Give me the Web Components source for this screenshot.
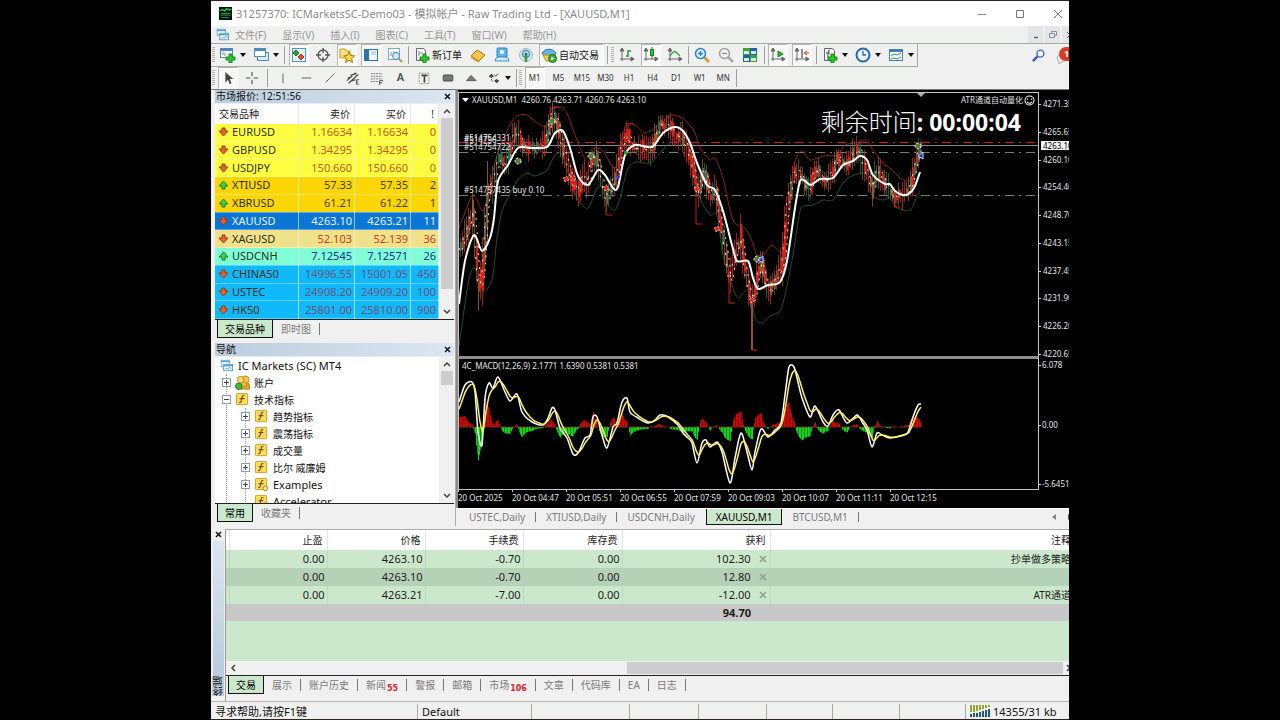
<!DOCTYPE html>
<html lang="zh-CN">
<head>
<meta charset="utf-8">
<title>31257370: ICMarketsSC-Demo03</title>
<style>
  html, body { margin: 0; background: #000; }
  body { height: 100vh; padding: 0 211px; box-sizing: border-box; display: flex;
    font: 11px/16px "Noto Sans", "Noto Sans CJK SC", sans-serif; color: #1c1c1c; }
</style>
</head>
<body>
<trade-terminal></trade-terminal>
<script>
const COMMON = `
  *{box-sizing:border-box}
  button{font:inherit;color:inherit;background:none;border:0;padding:0;margin:0;white-space:nowrap}
  svg{display:block;flex:none}
`;
function define(tag, css, html, ready) {
  const t = document.createElement('template');
  t.innerHTML = `<style>${COMMON}${css}</style>${html}`;
  customElements.define(tag, class extends HTMLElement {
    constructor() {
      super();
      this.attachShadow({ mode: 'open' }).append(t.content.cloneNode(true));
    }
    connectedCallback() { if (ready && !this.done) { this.done = true; ready(this.shadowRoot, this); } }
  });
}

/* ---------- icons ---------- */
const PLUS = '<path d="M9 7h3v3h3v3h-3v3H9v-3H6v-3h3z" fill="#2fc62f" stroke="#148a1c"/>';
const AXES = '<path d="M3 3v11M1 12h13M3 1L1 4h4zM15 12l-3-2v4z" fill="#666" stroke="#666"/>';
const FBOX = '<rect x="1.500" y="1.500" width="12" height="12" rx="1" fill="#fbdc5a" stroke="#c89a2c"/><path d="M10 4q-2-1-2.500 2l-1 4q-.5 2-2 1M5 7h5" fill="none" stroke="#6a5210" stroke-width="1.200"/>';
const ICONS = {
  logo: '<rect width="16" height="16" fill="#04140a"/><path d="M1 5l3-2 3 2 3-3 3 2 2-2M8 2v3" stroke="#1fd55b" stroke-width="1.500" fill="none"/><path d="M2 8h12M2 10h12M3 13h9" stroke="#2fae62"/>',
  app: '<rect x="1.500" y="1.500" width="10" height="8" fill="#fff" stroke="#5aa3d6"/><path d="M1 3h11" stroke="#5aa3d6" stroke-width="2"/><rect x="4.500" y="6.500" width="11" height="8" fill="#e9f5fd" stroke="#4a94cc"/><path d="M4 8h12" stroke="#5aa3d6" stroke-width="2"/><path d="M6 13l2-2 2 2 2-3 2 2" stroke="#5aa3d6" fill="none"/>',
  newchart: '<rect x=".5" y="1.500" width="12" height="9" fill="#fff" stroke="#4a8cc0"/><path d="M0 3h13" stroke="#4a8cc0" stroke-width="2"/><path d="M3 8V5m2 4V6" stroke="#888"/>' + PLUS,
  profiles: '<path d="M4.500 5.500h11v8h-11z" fill="#dcebf6" stroke="#4a8cc0"/><rect x="1.500" y="1.500" width="11" height="8" fill="#fff" stroke="#4a8cc0"/><path d="M1 3h12" stroke="#4a8cc0" stroke-width="2"/>',
  market: '<rect x="1.500" y="1.500" width="13" height="13" fill="#eaf6ff" stroke="#4a94cc"/><path d="M5 3l3 3-3 3-3-3z" fill="#2aa52a" stroke="#167a16"/><path d="M10 7l3 3-3 3-3-3z" fill="#e8532b" stroke="#b02d10"/>',
  target: '<circle cx="8" cy="8" r="5" fill="none" stroke="#555" stroke-width="1.300"/><path d="M8 1v5m0 4v5M1 8h5m4 0h5" stroke="#555" stroke-width="1.300"/>',
  star: '<path d="M1 2h5l1 2h4v7H1z" fill="#fde07a" stroke="#c79b23"/><path d="M10 5l1.600 3.500 4 .3-3 2.600 1 4-3.600-2.200L6.500 15.500l1-4-3-2.600 4-.4z" fill="#ffd83a" stroke="#a67c12"/>',
  nav: '<rect x="1.500" y="2.500" width="13" height="11" fill="#f4faff" stroke="#2d74ad"/><path d="M2 3h4v10H2z" fill="#2d74ad"/><path d="M8 5h5M8 7h5" stroke="#9bbad0"/>',
  tester: '<rect x="1.500" y="1.500" width="11" height="11" fill="#fff" stroke="#7ba9c9"/><path d="M4 9V5m3 5V4m3 4V5" stroke="#6d93b5"/><circle cx="9" cy="9" r="3.500" fill="#cfe9fb" stroke="#4a8cc0"/><path d="M12 12l3 3" stroke="#c6952e" stroke-width="2"/>',
  order: '<path d="M2.500 1.500h7l2 2v10h-9z" fill="#fff" stroke="#666"/><path d="M5 4v5M5 6h4" stroke="#888"/>' + PLUS,
  book: '<path d="M1 9l6-6 8 5-6 6z" fill="#f3c74a" stroke="#a97812"/><path d="M1 9l8 5v2l-8-5z" fill="#d9981f"/>',
  terminal: '<rect x="3" y="1" width="10" height="9" rx="1" fill="#5eb6ee" stroke="#2d7fbe"/><circle cx="8" cy="5" r="2" fill="#fff"/><path d="M1 14q0-4 4-4h6q4 0 4 4z" fill="#cfeafd" stroke="#4797cf"/>',
  signal: '<circle cx="8" cy="8" r="6.500" fill="#dbe9ee" stroke="#9bb7c1"/><circle cx="8" cy="7" r="3.500" fill="none" stroke="#4e91b3" stroke-width="1.500"/><path d="M8 7v8" stroke="#2ea22e" stroke-width="2.500"/><circle cx="8" cy="7" r="1.500" fill="#2b6b93"/>',
  auto: '<path d="M1 6q7-8 14 0l-2 3H3z" fill="#65b5e6" stroke="#2d7fae"/><path d="M2 8h12l-2 6H5z" fill="#f5cf50" stroke="#b88a1c"/><circle cx="11.500" cy="11.500" r="4" fill="#2fb52f" stroke="#157815"/><path d="M10 9.500v4l3.500-2z" fill="#fff"/>',
  bars: AXES + '<path d="M9 3v7M9 9H7m2-5h3" stroke="#1f9a2c" stroke-width="1.500" fill="none"/>',
  candles: AXES + '<path d="M9 0v12" stroke="#128a1c"/><rect x="7.500" y="2.500" width="3" height="6" fill="#2fc13a" stroke="#128a1c"/>',
  line: AXES + '<path d="M3 9q4-6 6-4t4 4" stroke="#2fa53a" stroke-width="1.300" fill="none"/>',
  zoomin: '<path d="M10 10l5 5" stroke="#d0a13a" stroke-width="3"/><circle cx="6.500" cy="6.500" r="5" fill="#dff2ff" stroke="#2d82c8" stroke-width="1.500"/><path d="M4 6.500h5M6.500 4v5" stroke="#2d82c8" stroke-width="1.500"/>',
  zoomout: '<path d="M10 10l5 5" stroke="#aaa" stroke-width="2.500"/><circle cx="6.500" cy="6.500" r="5" fill="#f3f3f3" stroke="#a0a0a0" stroke-width="1.500"/><path d="M4 6.500h5" stroke="#999" stroke-width="1.500"/>',
  tile: '<path d="M1 1h7v7H1zM8 8h7v7H8z" fill="#3ba33b"/><path d="M8 1h7v7H8zM1 8h7v7H1z" fill="#235fae"/><path d="M2 4h5v3H2zM9 4h5v3H9zM2 11h5v3H2zM9 11h5v3H9z" fill="#d6efd6"/>',
  scroll: AXES + '<path d="M8 4l5 3-5 3z" fill="#2fb53a" stroke="#128a1c"/>',
  shift: AXES + '<path d="M8 2v9" stroke="#555" stroke-width="1.300"/><path d="M15 6h-4m2-2l-3 2 3 2" stroke="#c24b1e" fill="none"/>',
  indicator: '<path d="M2.500 1.500h8l2 2v10h-10z" fill="#fff" stroke="#666"/><path d="M8 3q-2 0-2 3v5M4 6h4" stroke="#444" fill="none"/>' + PLUS,
  clock: '<circle cx="8" cy="8" r="6.500" fill="#e8f5ff" stroke="#2469b3" stroke-width="2"/><path d="M8 4v4h3" stroke="#2469b3" fill="none" stroke-width="1.300"/>',
  template: '<rect x="1.500" y="2.500" width="13" height="11" fill="#f4faf4" stroke="#3d7fae"/><path d="M1 4h14" stroke="#3d7fae" stroke-width="2"/><path d="M3 9l3-2 3 1 4-2M3 12l3-1 3 1 4-2" stroke="#487" fill="none"/>',
  search: '<circle cx="10" cy="6" r="3.700" fill="#f4f8ff" stroke="#4569c0" stroke-width="1.500"/><path d="M7 9l-5 5" stroke="#3c5cb0" stroke-width="2.500"/>',
  cursor: '<path d="M5 1v12l3-3 2 5 2-1-2-5h4z" fill="#444"/>',
  cross: '<path d="M8 1v5m0 4v5M1 8h5m4 0h5" stroke="#555" stroke-width="1.300"/>',
  vline: '<path d="M8 3v11" stroke="#555"/>', hline: '<path d="M3 8h11" stroke="#555"/>', trend: '<path d="M3 13L13 3" stroke="#555"/>',
  channel: '<path d="M1 11L11 2M3 14L14 4M2 8l4-1m-2 5l7-2M5 5l7-2" stroke="#444" stroke-width="1.200"/><path d="M15 10h-3v5h3m-3-2.500h2" stroke="#444" fill="none"/>',
  fibo: '<path d="M1 3h13M1 6h13M1 9h13M1 12h8" stroke="#666" stroke-dasharray="2 1"/><path d="M11 16v-5h4m-4 2.500h3" stroke="#444" fill="none"/>',
  label: '<rect x="2.500" y="2.500" width="11" height="12" fill="none" stroke="#888" stroke-dasharray="2 1"/><path d="M5 5h7M8.500 5v8" stroke="#444" stroke-width="2"/>',
  rect: '<rect x="2.500" y="4.500" width="11" height="7" rx="1" fill="#777" stroke="#444"/>',
  tri: '<path d="M3 11l5-6 6 6z" fill="#777" stroke="#555"/>',
  arrows: '<path d="M2 6l3-3 3 3-3 2zM8 11l3 3 3-3-3-2z" fill="#444"/><path d="M8 4l2 2 3-3M5 9l1 3" stroke="#444" fill="none"/>',
  f: FBOX,
  fdot: FBOX + '<circle cx="12" cy="12" r="2.500" fill="#ffe680" stroke="#a67c12"/>',
  people: '<path d="M5 15q0-7 6-7t4 7z" fill="#e6a91d" stroke="#a97812"/><circle cx="11" cy="5" r="4" fill="#f5c648" stroke="#b88a1c"/><path d="M3 12q0-5 5-5t4 5z" fill="#f3bd35" stroke="#b88a1c"/><circle cx="6" cy="5" r="3.500" fill="#f9d868" stroke="#b88a1c"/><circle cx="4" cy="12" r="3.500" fill="#3fb53a" stroke="#24872b"/>',
  smile: '<circle cx="8" cy="8" r="6.500" fill="none" stroke="#fff" stroke-width="1.500"/><path d="M5 5v2m6-2v2M4 10q4 4 8 0" stroke="#fff" stroke-width="1.500" fill="none"/>',
  net: '<path d="M1 0v7M4 0v7M7 0v6M10 0v5M13 0v4M16 0v3M19 0v2" stroke="#93ab2d" stroke-width="2"/><path d="M1 9v3M4 8v4M7 8v4M10 7v5M13 6v6M16 5v7M19 4v8" stroke="#1d577b" stroke-width="2"/>',
  down: '<path d="M4 1h3v3h3L5.500 9 1 4h3z" fill="#f0622c" stroke="#98360f"/>',
  up: '<path d="M4 9h3V6h3L5.500 1 1 6h3z" fill="#46cf4b" stroke="#157f22"/>'
};
define('ui-icon', ':host{display:block;flex:none}', '<svg aria-hidden="true"></svg>', (root, el) => {
  const name = el.getAttribute('name'), svg = root.querySelector('svg');
  const box = name === 'net' ? [20, 12] : /^(up|down)$/.test(name) ? [11, 10] : [16, 16];
  const w = el.getAttribute('size') || box[0];
  svg.setAttribute('viewBox', `0 0 ${box[0]} ${box[1]}`);
  svg.setAttribute('width', w);
  svg.setAttribute('height', Math.round(w * box[1] / box[0]));
  svg.innerHTML = ICONS[name];
});

/* ---------- toolbar parts ---------- */
define('tool-button', `
  :host{display:flex;width:24px;height:100%;flex:none}
  :host([menu]){width:33px} :host([menu=tight]){width:32px}
  :host([wide]){width:auto} :host([fluid]){width:auto;min-width:0}
  button{display:flex;align-items:center;justify-content:center;gap:2px;flex:1;font-size:10px;color:#111}
  :host([wide]) button{padding:0 4px}
  :host([pressed]) button{background:#f8f8f8;border:1px solid #b4b8b4;border-right-color:#fff;border-bottom-color:#fff;margin:0 2px}
  :host([pressed][wide]) button{margin:0 1px;padding:0 4px 0 1px}
  i{width:0;border:3px solid transparent;border-top:4px solid #111;border-bottom:0;display:none;margin-left:2px}
  :host([menu]) i{display:block}
  :host([small]) button{font-size:8px;color:#333}
`, '<button><slot></slot><i></i></button>', (root, el) => {
  if (el.title) root.querySelector('button').setAttribute('aria-label', el.title);
});
define('tool-sep', `:host{display:block;flex:none;width:var(--w,3px);height:100%;padding:2px 0}
  span{display:block;width:1px;height:100%;margin:0 auto;background:#9ba39b}`, '<span></span>');
define('tool-grip', `:host{display:block;flex:none;width:5px;height:16px;margin:auto 0}
  span{display:block;width:3px;height:100%;margin:auto;background:repeating-linear-gradient(#b4b4b4 0 1px,#eee 1px 2px)}`, '<span></span>');

define('title-bar', `
  :host{display:flex;flex:none;align-items:center;height:25px;background:#fff;color:#8c8c8c;font-size:11px;padding-left:8px}
  h1{font:inherit;margin:0 auto 0 4px;white-space:nowrap;overflow:hidden}
  button{width:38px;height:24px;display:grid;place-items:center}
  button:last-child{margin-right:-8px}
`, `<ui-icon name="logo" size="13"></ui-icon><h1>31257370: ICMarketsSC-Demo03 - 模拟帐户 - Raw Trading Ltd - [XAUUSD,M1]</h1>
  <button aria-label="最小化"><svg width="10" height="10"><path d="M1 5.500h8" stroke="#888"/></svg></button>
  <button aria-label="最大化"><svg width="10" height="10"><path d="M1.500 1.500h7v7h-7z" fill="none" stroke="#777"/></svg></button>
  <button aria-label="关闭"><svg width="10" height="10"><path d="M1 1l8 8M9 1l-8 8" stroke="#777"/></svg></button>`);

define('menu-bar', `
  :host{display:flex;flex:none;align-items:center;height:18px;background:#f0f0f0;border-bottom:1px solid #a3aba3;padding-left:5px;color:#979797;font-size:10px;overflow:hidden}
  nav{display:flex;gap:16px;margin:0 auto 0 6px}
  .mdi{display:flex;gap:2px;align-self:stretch;margin-right:-8px}
  .mdi button{width:15px;background:#e3e5e7;display:grid;place-items:center}
`, `<ui-icon name="app" size="13"></ui-icon><nav><button>文件(F)</button><button>显示(V)</button><button>插入(I)</button><button>图表(C)</button><button>工具(T)</button><button>窗口(W)</button><button>帮助(H)</button></nav>
  <div class="mdi"><button aria-label="最小化"><svg width="8" height="8"><path d="M2 6.500h4" stroke="#667" stroke-width="1.500"/></svg></button>
  <button aria-label="还原"><svg width="8" height="8"><path d="M2.500 2V.5h5v4H6M.5 2.500h5v4h-5z" fill="none" stroke="#8391a3"/></svg></button>
  <button aria-label="关闭"><svg width="8" height="8"><path d="M1 1l6 6M7 1L1 7" stroke="#667"/></svg></button></div>`);

define('main-toolbar', `
  :host{display:flex;flex:none;align-items:center;height:23px;background:#f0f0f0;overflow:hidden}
  .bar{display:flex;align-items:center;height:23px;border-bottom:1px solid #a3aba3;border-right:1px solid #a3aba3}
  .right{margin-left:auto;display:flex;align-items:center;gap:8px;margin-right:-5px}
  .note{position:relative;width:20px;height:18px}
  .note svg{position:absolute;left:2px;top:7px}
  .note b{position:absolute;left:5px;top:0;width:15px;height:14px;border-radius:7px;background:#d83b22;color:#fff;font-size:9px;line-height:14px;text-align:center}
`, `<div class="bar"><tool-grip></tool-grip>
  <tool-button menu title="新图表"><ui-icon name="newchart"></ui-icon></tool-button><tool-button menu title="配置文件"><ui-icon name="profiles"></ui-icon></tool-button>
  <tool-sep style="--w:5px"></tool-sep>
  <tool-button pressed title="市场报价"><ui-icon name="market"></ui-icon></tool-button><tool-button title="数据窗口"><ui-icon name="target"></ui-icon></tool-button>
  <tool-button pressed title="导航"><ui-icon name="star"></ui-icon></tool-button><tool-button pressed title="终端"><ui-icon name="nav"></ui-icon></tool-button>
  <tool-button title="策略测试"><ui-icon name="tester"></ui-icon></tool-button><tool-sep></tool-sep>
  <tool-button wide><ui-icon name="order"></ui-icon>新订单</tool-button>
  <tool-button title="编辑器"><ui-icon name="book"></ui-icon></tool-button><tool-button title="虚拟主机"><ui-icon name="terminal"></ui-icon></tool-button><tool-button title="信号"><ui-icon name="signal"></ui-icon></tool-button>
  <tool-button wide pressed><ui-icon name="auto"></ui-icon>自动交易</tool-button><tool-sep style="--w:5px"></tool-sep><tool-grip></tool-grip>
  <tool-button title="柱状图"><ui-icon name="bars"></ui-icon></tool-button><tool-button pressed title="蜡烛图"><ui-icon name="candles"></ui-icon></tool-button><tool-button title="折线图"><ui-icon name="line"></ui-icon></tool-button><tool-sep></tool-sep>
  <tool-button title="放大"><ui-icon name="zoomin"></ui-icon></tool-button><tool-button title="缩小"><ui-icon name="zoomout"></ui-icon></tool-button><tool-button title="平铺"><ui-icon name="tile"></ui-icon></tool-button><tool-sep style="--w:4px"></tool-sep>
  <tool-button pressed title="自动滚动"><ui-icon name="scroll"></ui-icon></tool-button><tool-button pressed title="图表平移"><ui-icon name="shift"></ui-icon></tool-button><tool-sep style="--w:4px"></tool-sep>
  <tool-button menu title="指标"><ui-icon name="indicator"></ui-icon></tool-button><tool-button menu title="周期"><ui-icon name="clock"></ui-icon></tool-button><tool-button menu title="模板"><ui-icon name="template"></ui-icon></tool-button></div>
  <div class="right"><ui-icon name="search" size="15"></ui-icon><div class="note"><svg width="12" height="11"><path d="M1 4q0-3 5-3t5 3-5 4l-3 2V8Q1 7 1 4z" fill="#e4e4ea" stroke="#b0b0b8"/></svg><b>1</b></div></div>`);

define('draw-toolbar', `
  :host{display:flex;flex:none;align-items:center;height:23px;background:#f0f0f0;border-bottom:1px solid #777}
  .tools,.frames{display:grid;height:22px}
  .tools{grid-template-columns:repeat(9,1fr) 32px;width:244px}
  .frames{grid-template-columns:repeat(9,1fr);width:212px}
  b{font:bold 11px/16px Roboto,sans-serif;color:#555}
`, `<tool-grip></tool-grip><tool-button pressed title="光标"><ui-icon name="cursor" size="14"></ui-icon></tool-button><tool-button title="十字"><ui-icon name="cross" size="14"></ui-icon></tool-button><tool-sep style="--w:7px"></tool-sep>
  <div class="tools"></div><tool-sep></tool-sep><tool-grip></tool-grip><div class="frames"></div><tool-sep></tool-sep>`, root => {
  const names = { vline: '垂直线', hline: '水平线', trend: '趋势线', channel: '通道', fibo: '斐波纳契', A: '文本', label: '标签', rect: '矩形', tri: '三角形', arrows: '箭头' };
  root.querySelector('.tools').innerHTML = Object.keys(names).map(n =>
    `<tool-button ${n === 'arrows' ? 'menu="tight"' : 'fluid'} title="${names[n]}">${n === 'A' ? '<b>A</b>' : `<ui-icon name="${n}" size="14"></ui-icon>`}</tool-button>`).join('');
  root.querySelector('.frames').innerHTML = 'M1 M5 M15 M30 H1 H4 D1 W1 MN'.split(' ').map((n, i) =>
    `<tool-button small fluid ${i ? '' : 'pressed'}>${n}</tool-button>`).join('');
});

/* ---------- generic dock parts ---------- */
define('tab-item', `
  :host{display:flex;flex:none;height:100%}
  button{padding:0 calc(var(--pad,8px) + 1px) 0 var(--pad,8px);color:#7b7b7b;display:flex;align-items:center;position:relative;height:100%}
  button::after{content:"";position:absolute;right:0;top:3px;bottom:3px;width:1px;background:#777}
  :host([bare]) button::after{display:none}
  :host([on]) button{background:#cbe8cd;color:#000;border:1px solid #111;border-top:0;padding:0 calc(var(--pad,8px) - 1px)}
  :host([on]) button::after{display:none}
  sub{color:#d8232f;font:bold 8px/10px "DejaVu Sans",sans-serif;align-self:flex-end;margin-left:1px}
`, '<button role="tab"><slot></slot><sub hidden></sub></button>', (root, el) => {
  const s = root.querySelector('sub');
  if (el.hasAttribute('count')) { s.hidden = false; s.textContent = el.getAttribute('count'); }
});
define('dock-panel', `
  :host{display:flex;flex-direction:column;background:#f0f0f0;min-height:0}
  header{display:flex;flex:none;justify-content:space-between;align-items:center;height:14px;background:linear-gradient(90deg,#bccddd,#dce6f2);padding:0 3px 0 1px;font-size:10px;color:#111;border-bottom:1px solid #e8eef4;overflow:hidden}
  h2{font:inherit;line-height:13px;margin:0}
  .body{display:flex;flex:1;min-height:0;background:#fff;overflow:hidden}
  .tabs{display:flex;flex:none;height:19px;border-top:1px solid #222;padding-left:2px;font-size:10px}
  ::slotted(.grow){flex:1;min-width:0}
`, `<header><h2></h2><button aria-label="关闭"><svg width="7" height="7"><path d="M1 1l5 5M6 1L1 6" stroke="#111" stroke-width="1.500"/></svg></button></header>
  <div class="body"><slot></slot></div><div class="tabs" role="tablist"><slot name="tab"></slot></div>`,
  (root, el) => { root.querySelector('h2').textContent = el.getAttribute('heading'); });
define('v-scroll', `
  :host{display:flex;flex-direction:column;align-items:center;width:15px;flex:none;background:#f0f0f0;padding:4px 1px}
  i{width:12px;height:var(--len);background:#cdcdcd;margin:3px 0 auto}
`, `<svg width="8" height="7"><path d="M1 5l3-3 3 3" fill="none" stroke="#444" stroke-width="1.500"/></svg><i></i><svg width="8" height="7"><path d="M1 2l3 3 3-3" fill="none" stroke="#444" stroke-width="1.500"/></svg>`);

const QUOTES = [
  ['down', 'EURUSD', '1.16634', '1.16634', 0, '#ffff42', '#c2571c'], ['down', 'GBPUSD', '1.34295', '1.34295', 0, '#ffff42', '#c2571c'],
  ['down', 'USDJPY', '150.660', '150.660', 0, '#ffff42', '#c2571c'], ['up', 'XTIUSD', '57.33', '57.35', 2, '#fdd605', '#453a1a'],
  ['up', 'XBRUSD', '61.21', '61.22', 1, '#fdd605', '#453a1a'], ['down', 'XAUUSD', '4263.10', '4263.21', 11, '#0a76d6', '#e8f4ff'],
  ['down', 'XAGUSD', '52.103', '52.139', 36, '#f0e28a', '#cc3b20'], ['up', 'USDCNH', '7.12545', '7.12571', 26, '#80ffd6', '#0a2f8c'],
  ['down', 'CHINA50', '14996.55', '15001.05', 450, '#10b9f9', '#6d5279'], ['down', 'USTEC', '24908.20', '24909.20', 100, '#10b9f9', '#6d5279'],
  ['down', 'HK50', '25801.00', '25810.00', 900, '#10b9f9', '#6d5279']];
define('quote-table', `
  :host{display:block}
  table{width:100%;height:100%;table-layout:fixed;border-collapse:collapse}
  th{font-weight:400;font-size:10px;height:20px;background:#fff;border-right:1px solid #e4e4e4;text-align:right;padding:0 4px}
  th:first-child{text-align:left}
  td{padding:0 2px;line-height:14px;text-align:right;border-right:1px solid #ffffff88;border-bottom:1px solid #ffffff55;background:var(--bg);color:var(--fg)}
  td:first-child{text-align:left;color:#28301c}
  tr.sel td{color:#e8f4ff}
  .s{display:flex;align-items:center;gap:3px;padding-left:1px}
`, `<table><colgroup><col><col style="width:56px"><col style="width:56px"><col style="width:28px"></colgroup>
  <thead><tr><th>交易品种</th><th>卖价</th><th>买价</th><th>!</th></tr></thead><tbody></tbody></table>`, root => {
  root.querySelector('tbody').innerHTML = QUOTES.map(q =>
    `<tr style="--bg:${q[5]};--fg:${q[6]}" class="${q[1] === 'XAUUSD' ? 'sel' : ''}"><td><span class="s"><ui-icon name="${q[0]}"></ui-icon>${q[1]}</span></td><td>${q[2]}</td><td>${q[3]}</td><td>${q[4]}</td></tr>`).join('');
});

define('nav-tree', `
  :host{display:block;overflow:hidden;color:#111}
  ul{list-style:none;margin:0;padding:0}
  .row{display:flex;align-items:center;height:17px;white-space:nowrap}
  .cjk{font-size:10px}
  .root{padding-left:5px;gap:5px}
  .l1{margin-left:11px;border-left:1px dotted #999}
  .l1 .row{gap:4px;margin-left:-5px}
  .l2{margin-left:18px;border-left:1px dotted #999}
  .row i{width:9px;height:9px;border:1px solid #8b9bb0;background:linear-gradient(#445,#445) center/5px 1px no-repeat,linear-gradient(#445,#445) center/1px 5px no-repeat,#fff;flex:none}
  .row i.open{background:linear-gradient(#445,#445) center/5px 1px no-repeat,#fff}
  .row i.none{border:0;background:none}
`, `<ul><li><div class="row root"><ui-icon name="app" size="13"></ui-icon>IC Markets (SC) MT4</div>
  <ul class="l1"><li><div class="row cjk"><i></i><ui-icon name="people" size="15"></ui-icon>账户</div></li>
  <li><div class="row cjk"><i class="open"></i><ui-icon name="f" size="15"></ui-icon>技术指标</div><ul class="l2"></ul></li></ul></li></ul>`, root => {
  root.querySelector('.l2').innerHTML = ['趋势指标', '震荡指标', '成交量', '比尔 威廉姆', 'Examples', 'Accelerator'].map((t, i) =>
    `<li><div class="row ${i < 4 ? 'cjk' : ''}"><i class="${i === 5 ? 'none' : ''}"></i><ui-icon name="${i < 4 ? 'f' : 'fdot'}" size="15"></ui-icon>${t}</div></li>`).join('');
});

/* ---------- charts ---------- */
const MID = [459,250,467,228,472,211,475,245,478,285,482,271,487,195,493,181,498,160,505,165,512,138,517,131,522,145,532,148,543,146,548,128,552,113,557,125,562,148,567,165,572,183,577,191,583,175,587,185,591,158,597,161,602,185,606,199,612,181,617,171,621,145,627,135,632,148,642,148,650,150,655,138,660,125,668,126,675,135,682,138,687,151,692,165,697,195,703,171,710,195,715,190,720,225,725,251,729,281,733,261,740,238,745,275,752,301,757,275,760,263,768,291,777,275,783,255,787,201,795,171,802,179,809,190,815,168,823,181,832,171,837,157,845,166,857,149,863,165,872,188,877,170,887,188,893,196,903,195,910,185,917,155,920,147];
const MA = [459,304,465,261,474,235,482,251,490,238,494,218,498,181,508,165,518,148,532,148,547,147,555,133,563,131,570,148,578,176,588,185,598,170,605,175,613,188,618,187,625,155,635,145,652,147,663,133,675,127,683,131,690,143,697,163,707,185,715,190,723,211,732,245,737,261,748,261,753,278,758,289,768,285,780,282,787,261,795,208,800,181,805,181,811,185,820,179,833,178,843,165,853,161,860,156,867,160,873,175,885,184,890,184,895,191,903,195,910,193,915,186,920,172];
const UP = [459,228,466,210,472,196,477,200,483,211,489,190,497,155,510,125,517,116,527,115,537,123,547,126,550,111,560,107,567,113,575,135,583,155,588,158,593,148,603,151,615,168,622,138,627,124,635,125,645,133,655,128,665,120,673,115,685,120,695,133,700,148,710,160,715,158,723,178,733,220,745,228,752,241,757,255,765,253,772,245,782,253,787,235,792,178,797,156,803,151,810,160,823,156,837,155,845,145,855,143,867,140,873,150,885,165,890,168,903,180,912,178,917,155,920,143];
const LO = [459,346,468,285,474,268,482,291,488,288,493,275,497,238,502,211,508,198,517,181,527,173,535,176,547,170,555,155,562,155,570,178,578,200,588,208,597,188,602,188,608,205,615,210,620,198,627,171,635,162,650,163,662,151,673,140,685,141,695,171,700,198,710,215,717,215,723,255,732,285,738,298,743,293,750,291,755,318,762,323,770,316,780,311,785,295,793,255,800,211,805,206,813,205,823,200,833,200,843,183,852,176,867,174,872,195,883,200,890,198,897,208,910,210,915,201,920,191];
const MACD = [459,402,465,385,472,382,475,392,478,432,482,445,485,398,489,383,493,388,498,377,505,392,510,401,517,394,522,412,532,422,543,425,548,418,552,408,555,410,560,428,567,438,573,454,578,453,585,438,590,435,593,417,597,417,602,435,607,448,613,427,617,423,622,402,627,398,630,412,638,418,648,423,655,420,660,415,668,417,678,425,683,433,688,438,692,443,697,463,702,443,706,440,710,447,717,442,722,452,730,483,735,458,741,433,747,452,752,470,755,452,761,429,768,437,775,430,781,423,785,395,789,367,794,367,798,382,802,398,810,417,815,406,823,422,828,426,833,415,839,410,847,423,857,415,862,422,867,430,872,447,877,433,882,435,890,438,903,435,908,432,913,417,918,405,921,404];
const at = (p, x) => {
  for (let i = 0; i < p.length - 2; i += 2)
    if (x <= p[i + 2]) return p[i + 1] + (p[i + 3] - p[i + 1]) * (x - p[i]) / (p[i + 2] - p[i]);
  return p[p.length - 1];
};
let seed = 7;
const rnd = () => (seed = seed * 16807 % 2147483647) / 2147483647;
/* Catmull-Rom spline through the points, written as cubic segments */
const line = (p, c, w = 1, extra = '') => {
  const n = p.length / 2, P = i => { i = Math.max(0, Math.min(n - 1, i)); return [p[2 * i], p[2 * i + 1]]; };
  let d = `M${P(0)}`;
  for (let i = 0; i < n - 1; i++) {
    const a = P(i - 1), b = P(i), e = P(i + 1), f = P(i + 2);
    d += `C${b[0] + (e[0] - a[0]) / 7},${b[1] + (e[1] - a[1]) / 7} ${e[0] - (f[0] - b[0]) / 7},${e[1] - (f[1] - b[1]) / 7} ${e}`;
  }
  return `<path d="${d}" fill="none" stroke="${c}" stroke-width="${w}" ${extra}/>`;
};

function priceSvg() {
  let s = '<path d="M459 142.500H1039" stroke="#c81e1e" stroke-dasharray="9 5 2 5"/><path d="M459 145.500H1039" stroke="#8c8c8c"/><path d="M459 152.500H1039M459 195.500H1039" stroke="#718071" stroke-dasharray="9 5 2 5"/>';
  s += line(UP, '#8f1f2b') + line(LO, '#23502a');
  for (let x = 460; x < 921; x += 2) {
    const y = at(MID, x), steep = Math.abs(at(MID, Math.min(x + 3, 920)) - y);
    const h = 3 + rnd() * 7 + steep * .5, c = ['#d81f1a', '#9a5230', '#75613a', '#d81f1a', '#b82a22', '#22704a'][Math.floor(rnd() * 6)];
    const m = y + (rnd() - .5) * 5;
    s += `<path d="M${x + .5} ${m - h - rnd() * 5}V${m + h + rnd() * 5}" stroke="${c}" opacity=".8"/>`;
    if (rnd() > .35) s += `<path d="M${x + 1} ${m - h * .6}V${m + h * .6}" stroke="${c}" stroke-width="2"/>`;
  }
  s += '<path d="M487.500 161V245M552.500 105v28M478.500 270v40" stroke="#7d5a30"/><path d="M552 107h7M606 190v25h6M696 170v54h6M729 270v33h6M627 124h6M895 190v17h5" fill="none" stroke="#c81f1a"/><path d="M752 300v50" stroke="#94502c" stroke-width="2"/><path d="M752 350h5" stroke="#e01f1a"/>';
  const sh = MID.map((v, i) => i % 2 ? v : v + 3);
  s += line(sh, '#f5e4b8', 1, 'stroke-dasharray="2 5"') + line(MID, '#e6f0da', 1, 'stroke-dasharray="2 9"');
  s += line(MA, '#fff', 2, 'stroke-linejoin="round"');
  s += [[566,179],[573,178],[606,188],[697,189],[717,229],[752,300]].map(d => `<circle cx="${d[0]}" cy="${d[1]}" r="2.500" fill="#e8241c" stroke="#ffd8c8" stroke-dasharray="2 2"/>`).join('');
  s += [[552,121],[518,161],[591,156],[757,259],[918,146]].map(d => `<circle cx="${d[0]}" cy="${d[1]}" r="3" fill="#5c7c30" stroke="#fff" stroke-dasharray="2 2"/>`).join('');
  s += '<circle cx="626" cy="153" r="2" fill="#22a02c"/><path d="M763 256v7l-5-3zM923 152v7l-5-3z" fill="#2534b8" stroke="#cdd4ff"/><circle cx="618" cy="177" r="2" fill="#2440e0"/><path d="M917 93h8l-4 4z" fill="#a8b0b0"/>';
  return `<g transform="translate(-459 -93)">${s}</g>`;
}
function macdSvg() {
  let s = '', y = 412, sig = [];
  for (let x = 459; x <= 921; x++) {
    const v = at(MACD, x); y += (v - y) * .27;
    if (x % 3 === 0 || x === 921) sig.push(x, y);
    const d = (y - v) * 1.4;
    if (Math.abs(d) > 1) s += `<path d="M${x + .5} 427V${427 - d}" stroke="${d > 0 ? '#c80808' : '#12d41c'}" opacity="${x % 3 ? 1 : .65}"/>`;
  }
  s += '<path d="M459 427h462" stroke="#7a3018" stroke-dasharray="8 2"/>' + line(MACD, '#fff', 1.5) + line(sig, '#fff35a', 1.5);
  return `<g transform="translate(-459 -359)">${s}</g>`;
}
define('chart-view', `
  :host{display:grid;grid-template-columns:minmax(0,1fr) 30px;grid-template-rows:minmax(0,1fr) 134px 18px;background:#000;color:#e4e4e4;font-size:8px;line-height:12px;
    border-left:2px solid #8a8a8a;padding-top:2px;overflow:hidden;min-height:0}
  .plot{position:relative;border:1px solid #c9c9c9;border-width:1px 1px 0 1px;overflow:hidden;min-width:0}
  .macd{border-top:3px solid #8d8d8d;border-bottom-width:1px}
  .plot svg.draw{position:absolute;left:0;top:0;width:100%;height:100%}
  .cap{position:absolute;left:3px;top:1px;white-space:pre;display:flex;align-items:center;gap:3px}
  .ea{position:absolute;right:3px;top:1px;display:flex;align-items:center;gap:1px}
  .time{position:absolute;right:17px;top:14px;font-size:24px;line-height:30px;color:#fff;font-weight:300;white-space:pre;display:flex}
  .time b{font-weight:700;font-size:23px}
  .ord{position:absolute;left:5px}
  .prices{display:flex;flex-direction:column;justify-content:space-between;padding:6px 0 0 4px;margin-bottom:-4px;position:relative}
  .prices span::before,.lv span::before{content:"";position:absolute;left:0;width:2px;height:1px;margin-top:6px;background:#ccc}
  .now{position:absolute;left:2px;right:0;top:49px;background:#f4f4f4;color:#000;line-height:9px;padding-left:2px}
  .lv{position:relative;display:flex;flex-direction:column;justify-content:space-between;padding:3px 0 0 3px}
  .axis{grid-column:1/-1;display:grid;grid-template-columns:repeat(9,54px);padding-top:2px;white-space:nowrap}
  .axis span{position:relative}
  .axis span::before{content:"";position:absolute;left:0;top:-2px;width:1px;height:2px;background:#ccc}
`, `<div class="plot price"><svg class="draw" role="img" aria-label="XAUUSD"></svg>
    <div class="cap"><svg width="7" height="4"><path d="M0 0h7L3.500 4z" fill="#fff"/></svg>XAUUSD,M1  4260.76 4263.71 4260.76 4263.10</div>
    <div class="ord" style="top:39px">#514754331</div><div class="ord" style="top:41px">#514756</div><div class="ord" style="top:48px">#514754722</div><div class="ord" style="top:91px">#514757435 buy 0.10</div>
    <div class="ea">ATR通道自动量化<ui-icon name="smile" size="11"></ui-icon></div>
    <div class="time">剩余时间<b>: 00:00:04</b></div></div>
  <div class="prices"><span>4271.35</span><span>4265.65</span><span>4260.10</span><span>4254.40</span><span>4248.70</span><span>4243.15</span><span>4237.45</span><span>4231.90</span><span>4226.20</span><span>4220.65</span><div class="now">4263.10</div></div>
  <div class="plot macd"><svg class="draw" role="img" aria-label="MACD"></svg><div class="cap">4C_MACD(12,26,9) 2.1771 1.6390 0.5381 0.5381</div></div>
  <div class="lv"><span>6.078</span><span>0.00</span><span>-5.6451</span></div>
  <div class="axis"></div>`, root => {
  root.querySelector('.price .draw').innerHTML = priceSvg();
  root.querySelector('.macd .draw').innerHTML = macdSvg();
  root.querySelector('.axis').innerHTML = ['2025', '04:47', '05:51', '06:55', '07:59', '09:03', '10:07', '11:11', '12:15'].map(t => `<span>20 Oct ${t}</span>`).join('');
});

define('chart-tabs', `
  :host{display:flex;flex:none;align-items:stretch;height:18px;background:#f0f0f0;border-top:1px solid #fff;padding:0 0 1px 3px;overflow:hidden;font-size:10px;--pad:10px}
  .arrows{margin-left:auto;display:flex;align-items:center;gap:12px;margin-right:-3px}
`, `<tab-item>USTEC,Daily</tab-item><tab-item>XTIUSD,Daily</tab-item><tab-item bare>USDCNH,Daily</tab-item><tab-item on>XAUUSD,M1</tab-item><tab-item>BTCUSD,M1</tab-item>
  <span class="arrows"><svg width="4" height="6"><path d="M4 0v6L0 3z" fill="#888"/></svg><svg width="4" height="6"><path d="M0 0v6l4-3z" fill="#555"/></svg></span>`);

/* ---------- terminal ---------- */
define('trade-panel', `
  :host{display:flex;flex:none;background:#f0f0f0;border-top:3px solid #f0f0f0;height:175px}
  .side{width:14px;flex:none;display:flex;flex-direction:column;align-items:center;padding:2px 1px 5px}
  .strip{flex:1;width:11px;margin-top:3px;background:linear-gradient(#dce6f2,#b9cbdc)}
  .side b{writing-mode:vertical-rl;transform:rotate(180deg);font:10px/12px "Noto Sans CJK SC",sans-serif;color:#111;background:#b9cbdc}
  .main{flex:1;min-width:0;display:flex;flex-direction:column;border-left:1px solid #999;border-top:1px solid #aaa}
  .wrap{flex:1;background:#cbe8cd;overflow:hidden}
  table{width:calc(100% + 2px);table-layout:fixed;border-collapse:collapse}
  th{background:#fff;font-weight:400;font-size:10px;height:20px;padding:0 4px;text-align:right;border-right:1px solid #e4e4e4}
  td{height:18px;padding:0 2px;line-height:16px;text-align:right;border-right:1px solid #bcd9be;background:#cbe8cd;white-space:nowrap}
  tr.alt td{background:#b5d2b8;border-color:#b5d2b8} tr.sum td{background:#c8c8c8;border:0;font-weight:700;height:17px}
  td.p{padding-right:3px}
  td.p span{display:inline-flex;align-items:center;gap:8px}
  tr.sum .p{padding-right:19px}
  td:last-child,th:last-child{border:0;padding-right:0}
  td:last-child{font-size:10px}
  .hs{height:14px;display:flex;flex:none;align-items:center;background:#f0f0f0;padding-left:4px;overflow:hidden}
  .hs i{height:12px;flex:none;width:52%;margin:0 3px 0 auto;background:#cdcdcd}
  .hs svg:last-child{margin-right:-3px}
  .tabs{display:flex;flex:none;height:19px;border-top:1px solid #222;padding-left:2px;font-size:10px;margin-bottom:7px}
`, `<div class="side"><button aria-label="关闭"><svg width="7" height="7"><path d="M1 1l5 5M6 1L1 6" stroke="#111" stroke-width="1.500"/></svg></button><div class="strip"></div><b>终端</b></div>
  <div class="main"><div class="wrap"><table><colgroup><col style="width:3px"><col style="width:98px"><col style="width:98px"><col style="width:98px"><col style="width:99px"><col style="width:148px"><col></colgroup>
  <thead><tr><th></th><th>止盈</th><th>价格</th><th>手续费</th><th>库存费</th><th>获利</th><th>注释</th></tr></thead><tbody></tbody></table></div>
  <div class="hs"><svg width="6" height="8"><path d="M5 1L2 4l3 3" fill="none" stroke="#444" stroke-width="1.500"/></svg><i></i><svg width="6" height="8"><path d="M1 1l3 3-3 3" fill="none" stroke="#444" stroke-width="1.500"/></svg></div>
  <div class="tabs" role="tablist"><tab-item on>交易</tab-item><tab-item>展示</tab-item><tab-item>账户历史</tab-item><tab-item count="55">新闻</tab-item><tab-item>警报</tab-item><tab-item>邮箱</tab-item><tab-item count="106">市场</tab-item><tab-item>文章</tab-item><tab-item>代码库</tab-item><tab-item>EA</tab-item><tab-item>日志</tab-item></div></div>`, root => {
  const rows = [['4263.10', '-0.70', '102.30', '抄单做多策略'], ['4263.10', '-0.70', '12.80', ''], ['4263.21', '-7.00', '-12.00', 'ATR通道']];
  const x = '<svg width="8" height="8"><path d="M1 1l6 6M7 1L1 7" stroke="#8f9d90" stroke-width="1.500"/></svg>';
  root.querySelector('tbody').innerHTML = rows.map((r, i) =>
    `<tr class="${i === 1 ? 'alt' : ''}"><td></td><td>0.00</td><td>${r[0]}</td><td>${r[1]}</td><td>0.00</td><td class="p"><span>${r[2]}${x}</span></td><td>${r[3]}</td></tr>`).join('') +
    '<tr class="sum"><td colspan="5"></td><td class="p">94.70</td><td></td></tr>';
});

define('status-bar', `
  :host{display:grid;flex:none;grid-template-columns:207px 114px 98px 69px 68px 66px 67px 66px minmax(0,1fr);align-items:center;height:18px;background:#f0f0f0;border-top:1px solid #b5b5b5;color:#111;padding-top:1px}
  span{height:15px;line-height:15px;border-right:1px solid #a3aba3;padding-left:4px;white-space:nowrap}
  span:first-child{font-size:10px;padding-left:2px}
  span:last-child{border:0;display:flex;align-items:center;gap:3px}
`, `<span>寻求帮助,请按F1键</span><span>Default</span><span></span><span></span><span></span><span></span><span></span><span></span><span><ui-icon name="net"></ui-icon>14355/31 kb</span>`);

define('trade-terminal', `
  :host{display:flex;flex-direction:column;flex:1;min-width:0;background:#f0f0f0;border-top:1px solid #2a2422;border-bottom:1px solid #2a2422;overflow:hidden;box-sizing:border-box}
  .work{flex:1;display:grid;grid-template-columns:245px minmax(0,1fr);grid-template-rows:minmax(0,1fr);min-height:0}
  .left{display:flex;flex-direction:column;padding:0 1px 4px 4px;background:#f0f0f0;gap:5px;border-right:1px solid #aaa;min-height:0}
  .quotes{height:248px;flex:none}
  .nav{flex:1}
  .right{display:flex;flex-direction:column;min-width:0;min-height:0}
  chart-view{flex:1}
`, `<title-bar></title-bar><menu-bar></menu-bar><main-toolbar></main-toolbar><draw-toolbar></draw-toolbar>
  <div class="work"><div class="left">
    <dock-panel class="quotes" heading="市场报价: 12:51:56"><quote-table class="grow"></quote-table><v-scroll style="--len:171px"></v-scroll><tab-item slot="tab" on>交易品种</tab-item><tab-item slot="tab">即时图</tab-item></dock-panel>
    <dock-panel class="nav" heading="导航"><nav-tree class="grow"></nav-tree><v-scroll style="--len:14px"></v-scroll><tab-item slot="tab" on>常用</tab-item><tab-item slot="tab">收藏夹</tab-item></dock-panel>
  </div><div class="right"><chart-view></chart-view><chart-tabs></chart-tabs></div></div>
  <trade-panel></trade-panel><status-bar></status-bar>`);
</script>
</body>
</html>
